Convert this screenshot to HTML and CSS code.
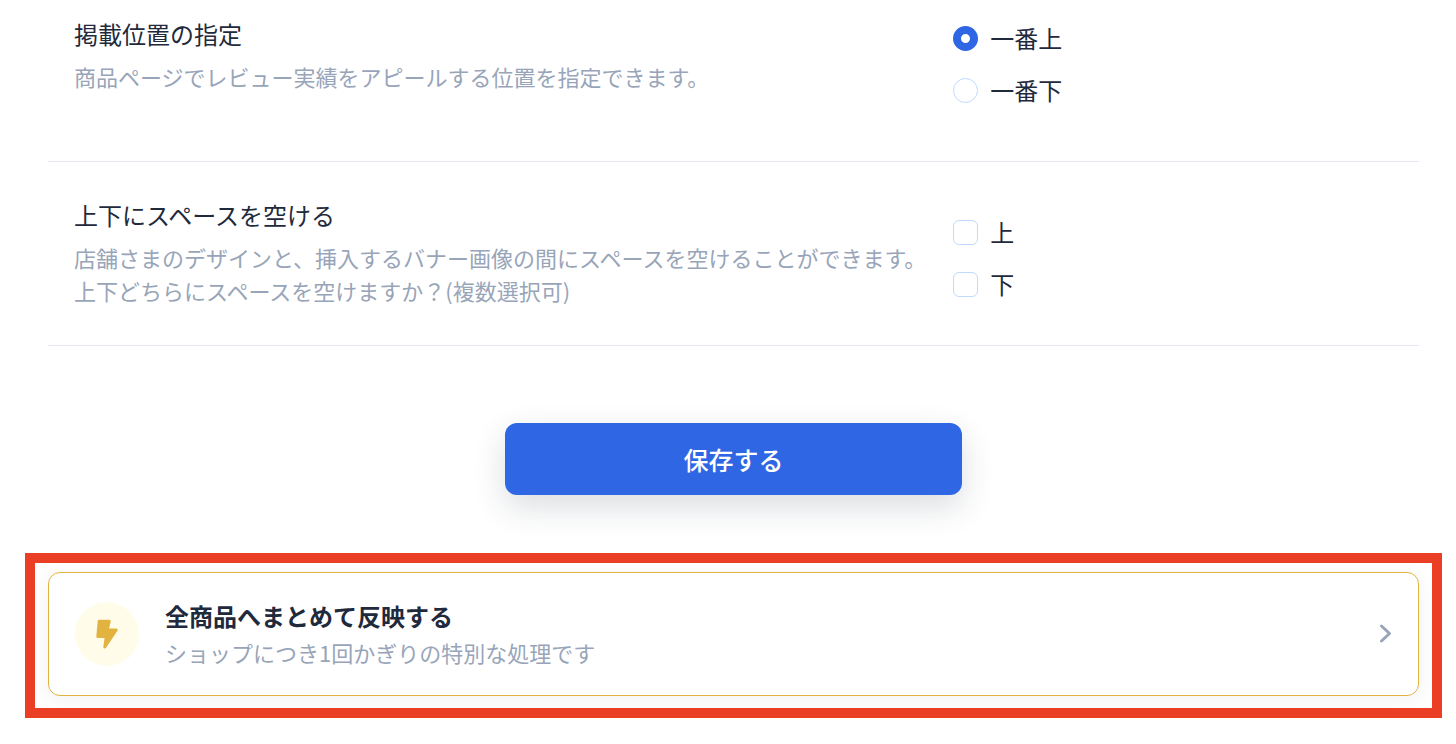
FILE: index.html
```html
<!DOCTYPE html>
<html lang="ja">
<head>
  <meta charset="UTF-8">
  <meta name="viewport" content="width=device-width, initial-scale=1.0">
  <title>レビュー実績の設定</title>
  <link rel="stylesheet" href="styles.css">
</head>
<body>
  <main class="page">
    <form class="settings">
      <!-- 掲載位置 -->
      <section class="setting-row position-row">
        <div class="setting-text">
          <h2 class="setting-title" id="position-title">掲載位置の指定</h2>
          <p class="setting-desc">商品ページでレビュー実績をアピールする位置を指定できます。</p>
        </div>
        <div class="options" role="radiogroup" aria-labelledby="position-title">
          <label class="option"><input type="radio" class="radio" name="position" value="top" checked>一番上</label>
          <label class="option"><input type="radio" class="radio" name="position" value="bottom">一番下</label>
        </div>
      </section>

      <!-- 上下のスペース -->
      <section class="setting-row space-row">
        <div class="setting-text">
          <h2 class="setting-title" id="space-title">上下にスペースを空ける</h2>
          <p class="setting-desc">店舗さまのデザインと、挿入するバナー画像の間にスペースを空けることができます。<br>上下どちらにスペースを空けますか？(複数選択可)</p>
        </div>
        <div class="options" role="group" aria-labelledby="space-title">
          <label class="option"><input type="checkbox" class="checkbox" name="space" value="top">上</label>
          <label class="option"><input type="checkbox" class="checkbox" name="space" value="bottom">下</label>
        </div>
      </section>

      <button type="button" class="save-btn">保存する</button>
    </form>

    <!-- 一括反映 -->
    <div class="highlight">
      <a href="#" class="bulk-card">
        <span class="bulk-icon">
          <svg width="24" height="32" viewBox="0 0 24 32" aria-hidden="true">
            <path d="M4.200 3.200H14.300L12.200 12H21.200L9.800 29L11.300 18.500H2.800Z"/>
          </svg>
        </span>
        <span class="bulk-text">
          <strong class="bulk-title">全商品へまとめて反映する</strong>
          <span class="bulk-desc">ショップにつき1回かぎりの特別な処理です</span>
        </span>
        <svg class="chevron" width="16" height="24" viewBox="0 0 16 24" aria-hidden="true">
          <path d="M5.500 4L13.500 11.500L5.500 19"/>
        </svg>
      </a>
    </div>
  </main>
</body>
</html>
```
FILE: styles.css
```css
:root {
  --primary: #2f66e4;
  --text: #1f2a3c;
  --muted: #98a5b9;
  --line: #e2e7f0;
  --control: #bfdbfe;
  --gold: #e3b341;
  --highlight: #eb3f25;
}

* {
  box-sizing: border-box;
  margin: 0;
  padding: 0;
}

body {
  background: #fff;
  color: var(--text);
  font-family: "Noto Sans CJK JP", sans-serif;
  font-size: 24px;
  line-height: 36px;
}

.page {
  padding: 0 37px 26px 48px;
}

.settings {
  display: flex;
  flex-direction: column;
}

/* 設定項目 */
.setting-row {
  display: grid;
  grid-template-columns: 2fr 1fr;
  align-items: start;
  padding: 35px 26px 38px;
  border-bottom: 1px solid var(--line);
}

.position-row {
  padding-top: 16px;
  padding-bottom: 53px;
}

.setting-title {
  font-size: 24px;
  font-weight: 400;
  line-height: 36px;
}

.setting-desc {
  margin-top: 8px;
  color: var(--muted);
  font-size: 22px;
  line-height: 33px;
}

.options {
  display: flex;
  flex-direction: column;
  gap: 16px;
  padding-top: 4px;
}

.space-row .options {
  padding-top: 17px;
}

.option {
  display: flex;
  align-items: center;
  gap: 12px;
  cursor: pointer;
}

.radio,
.checkbox {
  appearance: none;
  width: 25px;
  height: 25px;
  border: 1px solid var(--control);
  background: #fff;
}

.radio {
  border-radius: 50%;
}

.radio:checked {
  border: 8px solid var(--primary);
}

.checkbox {
  border-radius: 6px;
}

.checkbox:checked {
  background: var(--primary);
}

/* 保存ボタン */
.save-btn {
  align-self: center;
  width: 33.33%;
  height: 72px;
  margin: 77px 0 58px;
  border: none;
  border-radius: 12px;
  background: var(--primary);
  color: #fff;
  font-family: inherit;
  font-size: 25px;
  font-weight: 500;
  box-shadow: 0 12px 32px rgba(31, 42, 60, 0.16);
  cursor: pointer;
}

/* 一括反映カード */
.highlight {
  margin: 0 -23px;
  padding: 9px 13px 12px;
  border: 10px solid var(--highlight);
  overflow: hidden;
}

.bulk-card {
  display: flex;
  align-items: center;
  gap: 26px;
  padding: 24px 26px;
  border: 1px solid var(--gold);
  border-radius: 12px;
  background: #fff;
  color: var(--text);
  text-decoration: none;
  box-shadow: 0 4px 24px rgba(31, 42, 60, 0.06);
}

.bulk-icon {
  display: flex;
  align-items: center;
  justify-content: center;
  width: 64px;
  height: 64px;
  border-radius: 50%;
  background: #fffdea;
}

.bulk-icon path {
  fill: var(--gold);
  stroke: var(--gold);
  stroke-width: 3;
  stroke-linejoin: round;
}

.bulk-text {
  display: flex;
  flex: 1;
  flex-direction: column;
}

.bulk-title {
  font-weight: 700;
  line-height: 37px;
}

.bulk-desc {
  color: var(--muted);
  font-size: 22px;
  line-height: 37px;
}

.chevron path {
  fill: none;
  stroke: var(--muted);
  stroke-width: 3;
  stroke-linecap: round;
  stroke-linejoin: round;
}
```
